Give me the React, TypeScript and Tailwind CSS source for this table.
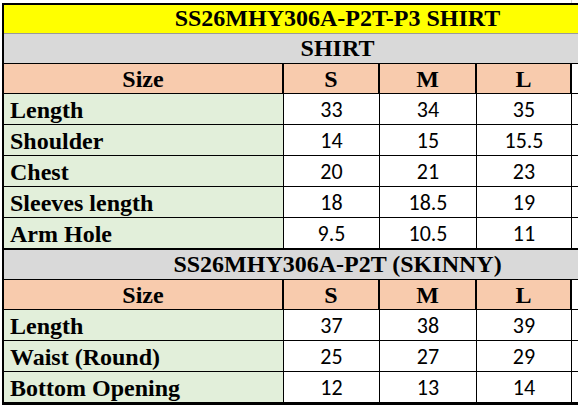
const serif = "font-['Liberation_Serif',serif] font-bold text-[24px] leading-none text-black";
const num = "font-['Carlito','Lato',sans-serif] text-[22px] leading-none text-black";

type Row = { label: string; s: string; m: string; l: string; last?: boolean };

const shirtRows: Row[] = [
  { label: "Length", s: "33", m: "34", l: "35" },
  { label: "Shoulder", s: "14", m: "15", l: "15.5" },
  { label: "Chest", s: "20", m: "21", l: "23" },
  { label: "Sleeves length", s: "18", m: "18.5", l: "19" },
  { label: "Arm Hole", s: "9.5", m: "10.5", l: "11", last: true },
];

const skinnyRows: Row[] = [
  { label: "Length", s: "37", m: "38", l: "39" },
  { label: "Waist (Round)", s: "25", m: "27", l: "29" },
  { label: "Bottom Opening", s: "12", m: "13", l: "14", last: true },
];

function TitleRow({ text, cls }: { text: string; cls: string }) {
  return (
    <div className={`flex border-b ${cls}`}>
      <div className={`flex w-[667px] shrink-0 items-end justify-center pb-[3px] ${serif}`}>{text}</div>
    </div>
  );
}

function HeaderRow() {
  return (
    <div className="flex h-[30px] border-b border-black">
      <div className={`flex w-[280px] shrink-0 items-end justify-center border-r-2 border-black bg-[#f8cbad] pb-[2px] ${serif}`}>
        Size
      </div>
      {["S", "M", "L"].map((s, i) => (
        <div
          key={s}
          className={`flex shrink-0 items-end justify-center border-r-2 border-black bg-[#f8cbad] pb-[2px] ${serif} ${
            i === 0 ? "w-[96px]" : i === 1 ? "w-[97px]" : "w-[95px]"
          }`}
        >
          {s}
        </div>
      ))}
      <div className="flex-1 bg-white" />
    </div>
  );
}

function DataRow({ row }: { row: Row }) {
  return (
    <div className={`flex ${row.last ? "h-[30px]" : "h-[31px] border-b border-black"}`}>
      <div className={`flex w-[280px] shrink-0 items-end border-r border-black bg-[#e2efda] pb-[2px] pl-[6px] ${serif}`}>
        {row.label}
      </div>
      <div className={`flex w-[96px] shrink-0 items-end justify-center border-r border-black bg-white pb-[3px] ${num}`}>
        {row.s}
      </div>
      <div className={`flex w-[97px] shrink-0 items-end justify-center border-r border-black bg-white pb-[3px] ${num}`}>
        {row.m}
      </div>
      <div className={`flex w-[95px] shrink-0 items-end justify-center border-r border-black bg-white pb-[3px] ${num}`}>
        {row.l}
      </div>
      <div className="flex-1 bg-white" />
    </div>
  );
}

export default function App() {
  return (
    <div className="h-[409px] w-[578px] overflow-hidden bg-white">
      <div className="flex h-[3px]">
        <div className="w-[571px] shrink-0" />
        <div className="w-px bg-[#d4d4d4]" />
      </div>
      <div className="ml-[2px] w-[669px] border-t-2 border-b-[3px] border-l-2 border-black">
        <TitleRow text="SS26MHY306A-P2T-P3 SHIRT" cls="h-[29px] bg-[#ffff00] border-[#9a9a9a]" />
        <TitleRow text="SHIRT" cls="h-[30px] bg-[#d9d9d9] border-black" />
        <HeaderRow />
        {shirtRows.map((r) => (
          <DataRow key={r.label} row={r} />
        ))}
        <div className="border-t-2 border-black">
          <TitleRow text="SS26MHY306A-P2T (SKINNY)" cls="h-[30px] bg-[#d9d9d9] border-black" />
        </div>
        <HeaderRow />
        {skinnyRows.map((r) => (
          <DataRow key={r.label} row={r} />
        ))}
      </div>
    </div>
  );
}
